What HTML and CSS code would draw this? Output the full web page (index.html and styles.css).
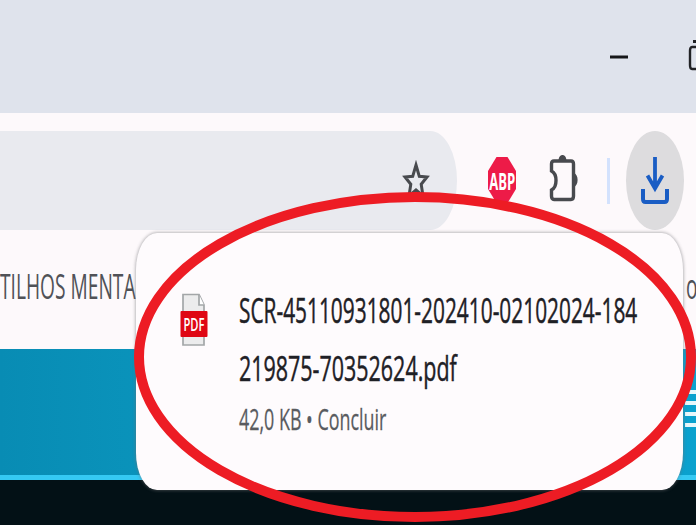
FILE: index.html
```html
<!DOCTYPE html>
<html lang="pt-BR">
<head>
<meta charset="utf-8">
<title>Downloads</title>
<link rel="stylesheet" href="styles.css">
</head>
<body>
<div class="window">
  <header class="tabstrip">
    <svg class="minimize" width="18" height="4" viewBox="0 0 18 4"><path d="M0 2H18" stroke="#151619" stroke-width="3"/></svg>
    <svg class="restore" width="8" height="34" viewBox="0 0 8 34"><path d="M8 8H4Q2 8 2 12V26Q2 30 4 30H8" fill="none" stroke="#222326" stroke-width="2.4"/><path d="M5 2.5H8" stroke="#222326" stroke-width="3"/></svg>
  </header>
  <nav class="toolbar">
    <div class="omnibox">
      <svg width="28" height="42" viewBox="0 0 28 42"><path d="M14 5L17.300 16.300L25 17L19.200 24.200L21 36L14 30L7 36L8.800 24.200L3 17L10.700 16.300Z" fill="none" stroke="#484a4e" stroke-width="3"/></svg>
    </div>
    <svg class="abp" width="28" height="46" viewBox="0 0 28 46"><path d="M8.500 0H19.500L28 14V32L19.500 46H8.500L0 32V14Z" fill="#ed1b48"/><text x="1.200" y="32.500" textLength="26" lengthAdjust="spacingAndGlyphs">ABP</text></svg>
    <svg class="puzzle" width="30" height="50" viewBox="0 0 30 50"><path d="M5 8H22Q24.500 8 24.500 11V43Q24.500 46.500 22 46.500H5Q2.500 46.500 2.500 43V37C8.500 34 8.500 21 2.500 18V11Q2.500 8 5 8Z" fill="none" stroke="#484a4e" stroke-width="3.400"/><path d="M9.500 8C9.500 0 17.500 0 17.500 8ZM24.500 20C30 21 30 33 24.500 34Z" fill="#484a4e"/></svg>
    <span class="divider"></span>
    <div class="download">
      <svg width="28" height="48" viewBox="0 0 28 48"><path d="M14 0V32M6.500 18.500L14 31.500L21.500 18.500" fill="none" stroke="#1a5dc4" stroke-width="3.800"/><path d="M2 32V42Q2 45 4.500 45H23.500Q26 45 26 42V32" fill="none" stroke="#1a5dc4" stroke-width="4"/></svg>
    </div>
  </nav>
  <div class="bookmarks"><span class="bookmark">TILHOS MENTA</span><span class="bookmark next">o</span></div>
  <main class="banner"><div class="menu"><i></i><i></i><i></i><i></i></div></main>
  <footer class="bottom"></footer>
</div>
<section class="popup">
  <svg class="pdf" width="28" height="54" viewBox="0 0 28 54">
    <path d="M3 1.500H19L24 12V52H3Z" fill="#ececed" stroke="#a3a6a8" stroke-width="1.700"/>
    <path d="M19 1.500V12H24" fill="#fff" stroke="#a3a6a8" stroke-width="1.700"/>
    <rect x=".5" y="18" width="27" height="26" rx="1" fill="#df0714"/>
    <text x="3.500" y="38" textLength="21" lengthAdjust="spacingAndGlyphs">PDF</text>
  </svg>
  <div class="file">
    <div class="name first">SCR-45110931801-202410-02102024-184</div>
    <div class="name second">219875-70352624.pdf</div>
    <div class="meta">42,0 KB • Concluir</div>
  </div>
</section>
<svg class="marker" width="696" height="525" viewBox="0 0 696 525"><ellipse cx="415" cy="357" rx="276" ry="160" fill="none" stroke="#ed1c24" stroke-width="10"/></svg>
</body>
</html>
```
FILE: styles.css
```css
* { box-sizing: border-box; }
body {
  margin: 0;
  width: 696px;
  height: 525px;
  overflow: hidden;
  position: relative;
  font-family: "Open Sans", "Noto Sans", sans-serif;
}
svg { display: block; flex: none; }
.window { height: 525px; display: flex; flex-direction: column; background: #fdf9fb; overflow: hidden; }
.tabstrip {
  height: 113px;
  flex: none;
  background: #dfe3ec;
  display: flex;
  align-items: center;
  justify-content: flex-end;
  gap: 60px;
}
.restore { margin-top: -2px; }
.toolbar { height: 117px; flex: none; padding-top: 18px; display: flex; align-items: center; overflow: hidden; }
.omnibox {
  width: 457px;
  height: 99px;
  flex: none;
  background: #e9eaef;
  border-radius: 0 27px 27px 0 / 0 50px 50px 0;
  display: flex;
  align-items: center;
  justify-content: flex-end;
  padding-right: 27px;
}
.abp { margin-left: 31px; margin-top: -1px; }
.abp text { font: 700 24px "Open Sans", sans-serif; fill: #fff; }
.puzzle { margin-left: 33px; margin-top: -6px; }
.divider { width: 3px; height: 46px; margin-left: 28px; background: #d3e2fd; }
.download {
  width: 58px;
  height: 99px;
  flex: none;
  margin-left: 16px;
  border-radius: 50%;
  background: #dddcde;
  display: flex;
  align-items: center;
  justify-content: center;
}
.bookmarks { height: 119px; flex: none; display: flex; color: #505257; font-size: 35px; line-height: 48px; padding-top: 32px; overflow: hidden; }
.bookmark { width: 686px; flex: none; white-space: nowrap; transform: scaleX(.548); transform-origin: 0 0; }
.next { width: 10px; }
.banner {
  height: 131px;
  flex: none;
  background: linear-gradient(90deg, #088cb4, #0b96be 30%, #0ba1ce);
  border-bottom: 5px solid #35c9f3;
  display: flex;
  justify-content: flex-end;
}
.menu { width: 11px; padding-top: 41px; display: flex; flex-direction: column; gap: 7px; }
.menu i { height: 4px; background: #e8f7fb; }
.bottom { flex: 1; background: #031116; }
.popup {
  position: absolute;
  left: 136px;
  top: 233px;
  width: 547px;
  height: 257px;
  border-radius: 21px / 37px;
  background: #fefbfd;
  box-shadow: 0 0 3px 1px rgba(110, 110, 115, .45);
  display: flex;
  padding: 60px 0 0 44px;
}
.pdf text { font: 600 18px "Open Sans", sans-serif; fill: #fff; }
.file { margin-left: 31px; margin-top: -12px; white-space: nowrap; width: 400px; }
.name { width: 670px; font-size: 35px; line-height: 58px; color: #1e2025; -webkit-text-stroke: .5px #1e2025; transform-origin: 0 0; }
.first { transform: scaleX(.596); }
.second { transform: scaleX(.613); }
.meta { font-size: 30px; line-height: 44px; color: #595b60; -webkit-text-stroke: .3px #595b60; transform: scaleX(.596); transform-origin: 0 0; }
.marker { position: absolute; left: 0; top: 0; }
```
